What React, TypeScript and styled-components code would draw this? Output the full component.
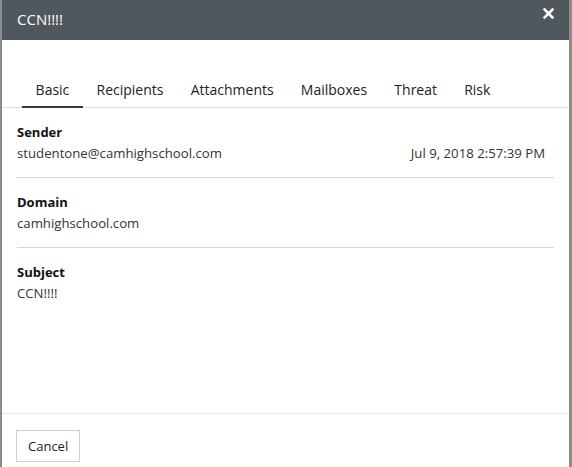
import styled, { createGlobalStyle } from "styled-components";

const GlobalStyle = createGlobalStyle`
  html, body {
    margin: 0;
    padding: 0;
    background: #8c8c8c;
  }
  body {
    font-family: "Open Sans", "Liberation Sans", sans-serif;
    color: #222;
  }
`;

type FieldProps = {
  label: string,
  value: string,
  extra?: string,
  last?: boolean,
}

const tabs = ["Basic", "Recipients", "Attachments", "Mailboxes", "Threat", "Risk"];

const Field = (props: FieldProps) => {
  return (
    <StyledField $last={props.last}>
      <h4>{props.label}</h4>
      <div className="row">
        <span>{props.value}</span>
        {props.extra && <span>{props.extra}</span>}
      </div>
    </StyledField>
  );
};

export default function App() {
  return (
    <>
      <GlobalStyle />
      <Modal>
        <Header>
          <h2>CCN!!!!</h2>
          <CloseButton aria-label="close">
            <svg width="11" height="11" viewBox="0 0 11 11">
              <path d="M1.5 1.5 L9.5 9.5 M9.5 1.5 L1.5 9.5" stroke="#fff" strokeWidth="2.6" strokeLinecap="square" />
            </svg>
          </CloseButton>
        </Header>
        <Body>
          <TabList>
            {tabs.map((t, i) => (
              <Tab key={t} $active={i === 0}>{t}</Tab>
            ))}
          </TabList>
          <Fields>
            <Field label="Sender" value="studentone@camhighschool.com" extra="Jul 9, 2018 2:57:39 PM" />
            <Field label="Domain" value="camhighschool.com" />
            <Field label="Subject" value="CCN!!!!" last />
          </Fields>
        </Body>
        <Footer>
          <Button>Cancel</Button>
        </Footer>
      </Modal>
    </>
  );
}

const Modal = styled.div`
  margin: 0 3px 0 2px;
  height: 467px;
  background: #fff;
  display: flex;
  flex-direction: column;
`;

const Header = styled.div`
  height: 40px;
  background: #50575d;
  display: flex;
  align-items: center;
  justify-content: space-between;
  padding: 0 15px 0 15px;
  box-sizing: border-box;

  h2 {
    margin: 0;
    font-size: 15px;
    font-weight: 400;
    color: #fff;
    margin-top: -3px;
  }
`;

const CloseButton = styled.button`
  border: none;
  background: none;
  padding: 0;
  margin-top: -13px;
  display: flex;
  cursor: pointer;
`;

const Body = styled.div`
  flex: 1;
`;

const TabList = styled.div`
  display: flex;
  margin-top: 33px;
  padding-left: 20px;
  border-bottom: 1px solid #dcdcdc;
`;

const Tab = styled.div<{ $active?: boolean }>`
  padding: 7px 13.6px 7px;
  font-size: 14px;
  color: #222;
  border-bottom: 2px solid ${(p) => (p.$active ? "#333a40" : "transparent")};
  margin-bottom: -1px;
`;

const Fields = styled.div`
  padding: 15px 15px 0 15px;
`;

const StyledField = styled.div<{ $last?: boolean }>`
  padding-bottom: ${(p) => (p.$last ? "0" : "15px")};
  margin-bottom: 15px;
  border-bottom: ${(p) => (p.$last ? "none" : "1px solid #d6d6d6")};

  h4 {
    margin: 0 0 3px;
    font-size: 13px;
    font-weight: 700;
    color: #111;
  }

  .row {
    display: flex;
    justify-content: space-between;
    font-size: 13.2px;
    color: #333;
    padding-right: 9px;
  }
`;

const Footer = styled.div`
  border-top: 1px solid #e6e6e6;
  padding: 16px 14px 5px;
`;

const Button = styled.button`
  font-family: "Open Sans", "Liberation Sans", sans-serif;
  font-size: 13px;
  color: #222;
  background: #fff;
  border: 1px solid #cfcfcf;
  height: 32px;
  padding: 0 11px;
`;
